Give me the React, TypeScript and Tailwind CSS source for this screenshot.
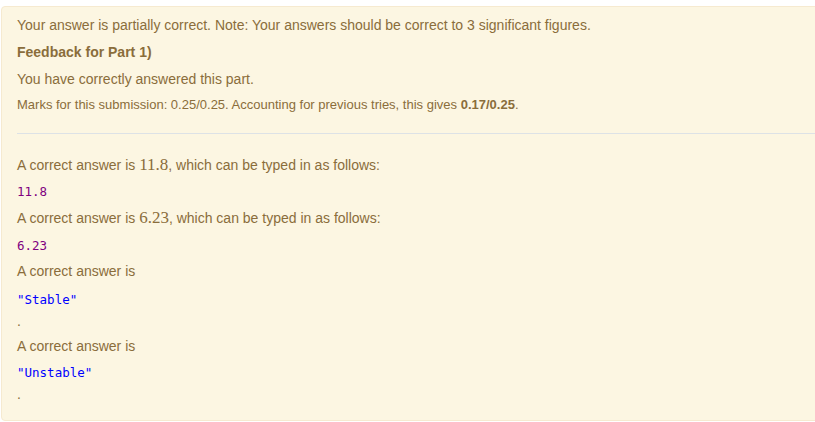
import React from "react";

const sans = { fontFamily: '"Liberation Sans", Arial, sans-serif' };
const mono = { fontFamily: '"DejaVu Sans Mono", "Liberation Mono", monospace' };
const serif = { fontFamily: '"Liberation Serif", "Times New Roman", serif' };

function MonoLine({ children, color }: { children: React.ReactNode; color: string }) {
  return (
    <div className={`text-[12.5px] leading-[20px] ${color}`} style={mono}>
      {children}
    </div>
  );
}

function Num({ children }: { children: React.ReactNode }) {
  return (
    <span className="text-[17px]" style={serif}>
      {children}
    </span>
  );
}

export default function App() {
  return (
    <div className="w-[815px] h-[422px] overflow-hidden bg-white" style={sans}>
      <div className="ml-[1px] mt-[6px] w-[840px] rounded-[4px] border border-[#f6ead0] bg-[#fcf6e2] pb-[16px] text-[14px] leading-[20px] text-[#8a6d3b]">
        <div className="px-[15px] pt-[8px]">
          <p>Your answer is partially correct. Note: Your answers should be correct to 3 significant figures.</p>
          <p className="mt-[7px] font-bold">Feedback for Part 1)</p>
          <p className="mt-[7px]">You have correctly answered this part.</p>
          <p className="mt-[6px] text-[13px]">
            Marks for this submission: 0.25/0.25. Accounting for previous tries, this gives{" "}
            <b>0.17/0.25</b>.
          </p>
        </div>
        <hr className="ml-[15px] mt-[18px] border-0 border-t border-[#dde2e6]" />
        <div className="px-[15px] pt-[21px]">
          <p>
            A correct answer is <Num>11.8</Num>, which can be typed in as follows:
          </p>
          <div className="mt-[7px]">
            <MonoLine color="text-[#800080]">11.8</MonoLine>
          </div>
          <p className="mt-[6px]">
            A correct answer is <Num>6.23</Num>, which can be typed in as follows:
          </p>
          <div className="mt-[8px]">
            <MonoLine color="text-[#800080]">6.23</MonoLine>
          </div>
          <p className="mt-[5px]">A correct answer is</p>
          <div className="mt-[9px]">
            <MonoLine color="text-[#0000ff]">"Stable"</MonoLine>
          </div>
          <p className="mt-[1px]">.</p>
          <p className="mt-[5px]">A correct answer is</p>
          <div className="mt-[7px]">
            <MonoLine color="text-[#0000ff]">"Unstable"</MonoLine>
          </div>
          <p className="mt-[1px]">.</p>
        </div>
      </div>
    </div>
  );
}
